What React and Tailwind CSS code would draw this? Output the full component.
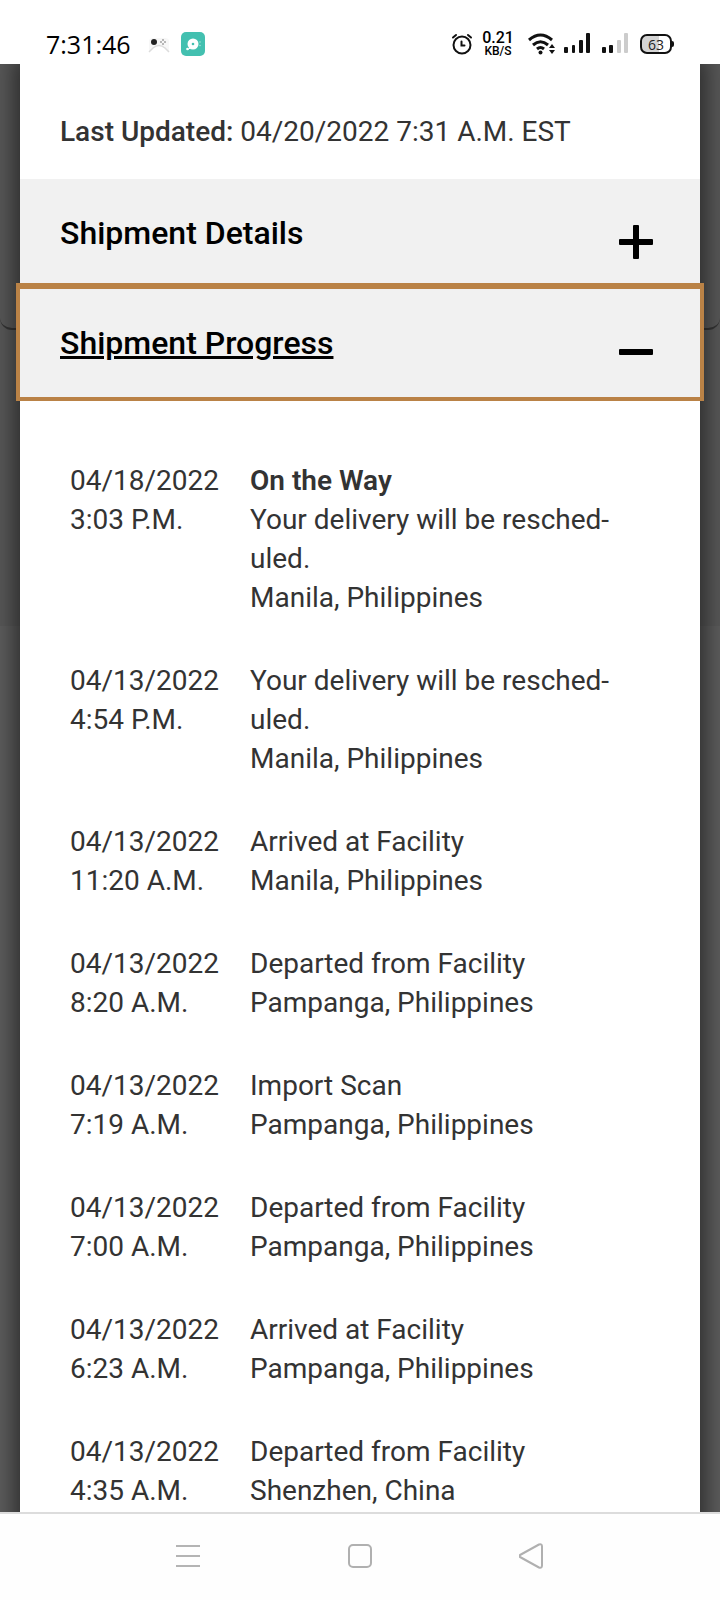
import { useState } from 'react'

const eventos = [
  { date: '04/18/2022', time: '3:03 P.M.', title: 'On the Way', status: 'Your delivery will be resched\u00aduled.', place: 'Manila, Philippines' },
  { date: '04/13/2022', time: '4:54 P.M.', status: 'Your delivery will be resched\u00aduled.', place: 'Manila, Philippines' },
  { date: '04/13/2022', time: '11:20 A.M.', status: 'Arrived at Facility', place: 'Manila, Philippines' },
  { date: '04/13/2022', time: '8:20 A.M.', status: 'Departed from Facility', place: 'Pampanga, Philippines' },
  { date: '04/13/2022', time: '7:19 A.M.', status: 'Import Scan', place: 'Pampanga, Philippines' },
  { date: '04/13/2022', time: '7:00 A.M.', status: 'Departed from Facility', place: 'Pampanga, Philippines' },
  { date: '04/13/2022', time: '6:23 A.M.', status: 'Arrived at Facility', place: 'Pampanga, Philippines' },
  { date: '04/13/2022', time: '4:35 A.M.', status: 'Departed from Facility', place: 'Shenzhen, China' },
]

function StatusBar() {
  return (
    <header className="flex h-16 items-center justify-between bg-white pt-6 pr-[46px] pl-[46px] text-black">
      <div className="flex items-center">
        <span className="font-['Open_Sans',sans-serif] text-[25px] leading-10">7:31:46</span>
        <svg className="ml-4 h-6 w-6" viewBox="0 0 24 24" fill="none">
          <path d="M2 20V9q0-3 4-3h12q4 0 4 3v11l-4-4q-6-5-12 0Z" fill="#f7f7f7" />
          <path d="M2 20l4-4q6-5 12 0l4 4" stroke="#dcdcdc" strokeWidth="1.5" />
          <circle cx="7" cy="10" r="3" fill="#222" />
          <path d="M16 7v2M16 11v2M13 10h2M17 10h2" stroke="#777" />
        </svg>
        <svg className="ml-2.5 h-6 w-6" viewBox="0 0 24 24">
          <rect width="24" height="24" rx="5" fill="#43c0b0" />
          <circle cx="12" cy="12" r="5.5" fill="#fff" />
          <circle cx="6.5" cy="17" r="1.3" fill="#fff" />
          <path d="M6.5 17.500l4-2" stroke="#fff" />
          <circle cx="12" cy="12" r="1.3" fill="#43c0b0" />
          <circle cx="19" cy="10" r="0.7" fill="#b5e8e1" />
          <circle cx="19" cy="13.5" r="0.7" fill="#b5e8e1" />
        </svg>
      </div>
      <div className="flex items-center">
        <svg className="h-6 w-6" viewBox="0 0 24 24" fill="none" stroke="#111" strokeWidth="2" strokeLinecap="round">
          <circle cx="12" cy="13" r="8.5" />
          <path d="M11.500 9.500v4h3M3 5.500l3-2.500M21 5.500l-3-2.500" />
        </svg>
        <div className="ml-2 w-8 text-center font-medium">
          <p className="text-[16px] leading-[14px]">0.21</p>
          <p className="text-[12px] leading-3">KB/S</p>
        </div>
        <svg className="ml-3.5 h-6 w-7" viewBox="0 0 28 24" fill="none" stroke="#111" strokeWidth="3">
          <path d="M1 8q11.500-10 23 0M5 13q7.500-6.500 15 0M9 17q3.500-3 7 0" />
          <circle cx="12.500" cy="20.500" r="2" fill="#111" stroke="none" />
          <path d="M21 16l3-4 3 4ZM21 18l3 4 3-4Z" fill="#111" stroke="none" />
        </svg>
        <svg className="ml-2 h-6 w-7" viewBox="0 0 28 24" fill="#111">
          <rect x="0" y="15" width="4" height="6" rx="1" />
          <rect x="8" y="13" width="3" height="8" rx="1" />
          <rect x="15" y="8" width="4" height="13" rx="1" />
          <rect x="22" y="1" width="4" height="20" rx="1" />
        </svg>
        <svg className="ml-2.5 h-6 w-7" viewBox="0 0 28 24" fill="#111">
          <rect x="0" y="15" width="4" height="6" rx="1" />
          <rect x="7" y="13" width="4" height="8" rx="1" />
          <rect x="15" y="8" width="4" height="13" rx="1" fill="#ccc" />
          <rect x="22" y="1" width="4" height="20" rx="1" fill="#ccc" />
        </svg>
        <div className="ml-2.5 flex items-center">
          <span className="flex h-5 w-8 items-center justify-center rounded-[7px] border-2 border-[#111] bg-linear-to-r from-[#d4d4d4] from-60% to-white to-60% font-['Open_Sans',sans-serif] text-[14px] text-[#222]">63</span>
          <span className="h-1.5 w-0.5 rounded-r bg-[#111]"></span>
        </div>
      </div>
    </header>
  )
}

function NavBar() {
  return (
    <nav className="flex h-[88px] items-center justify-center gap-[146px] border-t-2 border-[#dcdcdc] bg-[#fefefe] pb-0.5">
      <button aria-label="Recent apps">
        <svg className="h-[26px] w-[26px]" viewBox="0 0 26 26" stroke="#b4b4b4" strokeWidth="2">
          <path d="M1 3h24M1 13h24M1 23h24" />
        </svg>
      </button>
      <button aria-label="Home">
        <svg className="h-[26px] w-[26px]" viewBox="0 0 26 26" fill="none" stroke="#b0b0b0" strokeWidth="2">
          <rect x="2" y="2" width="22" height="22" rx="4" />
        </svg>
      </button>
      <button aria-label="Back">
        <svg className="h-[26px] w-[26px]" viewBox="0 0 26 26" fill="none" stroke="#b0b0b0" strokeWidth="2" strokeLinejoin="round">
          <path d="M1 12L20 1.500q3-1 3 2v19q0 3-3 2L1 14q-1-1 0-2Z" />
        </svg>
      </button>
    </nav>
  )
}

function SectionIcon({ open }) {
  return (
    <svg className="mt-[18px] h-9 w-9" viewBox="0 0 36 36" fill="#000">
      <rect x="1" y="15" width="34" height="6" rx="1" />
      {!open && <rect x="15" y="1" width="6" height="34" rx="1" />}
    </svg>
  )
}

function App() {
  const [details, setDetails] = useState(false)
  const [progress, setProgress] = useState(true)

  return (
    <div className="flex h-screen flex-col overflow-hidden bg-white font-['Roboto',sans-serif]">
      <StatusBar />

      <div className="relative flex-1 overflow-hidden bg-[#575757]">
        {/* Page behind the dialog */}
        <div className="absolute inset-x-0 top-0 h-[266px] rounded-b-xl border-b-2 border-[#333]"></div>
        <div className="absolute inset-x-0 top-[562px] bottom-0 bg-[#5c5c5c]"></div>

        <main className="relative mx-5 min-h-full bg-white text-[28px] leading-[39px] text-[#333] shadow-[0_0_20px_6px_rgba(0,0,0,0.5)]">
          <p className="px-10 pt-12 pb-7">
            <strong className="font-medium">Last Updated:</strong> 04/20/2022 7:31 A.M. EST
          </p>

          <h2>
            <button
              className="flex h-[108px] w-full items-center justify-between bg-[#f1f1f1] pr-[46px] pl-10 text-[32px] font-medium text-black"
              aria-expanded={details}
              onClick={() => setDetails(!details)}
            >
              <span>Shipment Details</span>
              <SectionIcon open={details} />
            </button>
          </h2>

          <h2>
            <button
              className="flex h-[110px] w-full items-center justify-between border-t-2 border-[#ba8246] bg-[#f1f1f1] pr-[46px] pl-10 text-[32px] font-medium text-black underline outline-4 outline-[#ba8246]"
              aria-expanded={progress}
              onClick={() => setProgress(!progress)}
            >
              <span>Shipment Progress</span>
              <SectionIcon open={progress} />
            </button>
          </h2>

          {progress && (
            <div className="px-[50px] pt-16">
              <table className="w-full">
                <tbody>
                  {eventos.map((e) => (
                    <tr key={e.date + e.time} className="align-top">
                      <td className="w-[180px] pb-11">
                        {e.date}
                        <br />
                        {e.time}
                      </td>
                      <td className="pr-10 pb-11">
                        {e.title && <p className="font-semibold">{e.title}</p>}
                        <p>{e.status}</p>
                        <p>{e.place}</p>
                      </td>
                    </tr>
                  ))}
                </tbody>
              </table>
            </div>
          )}
        </main>
      </div>

      <NavBar />
    </div>
  )
}

export default App
